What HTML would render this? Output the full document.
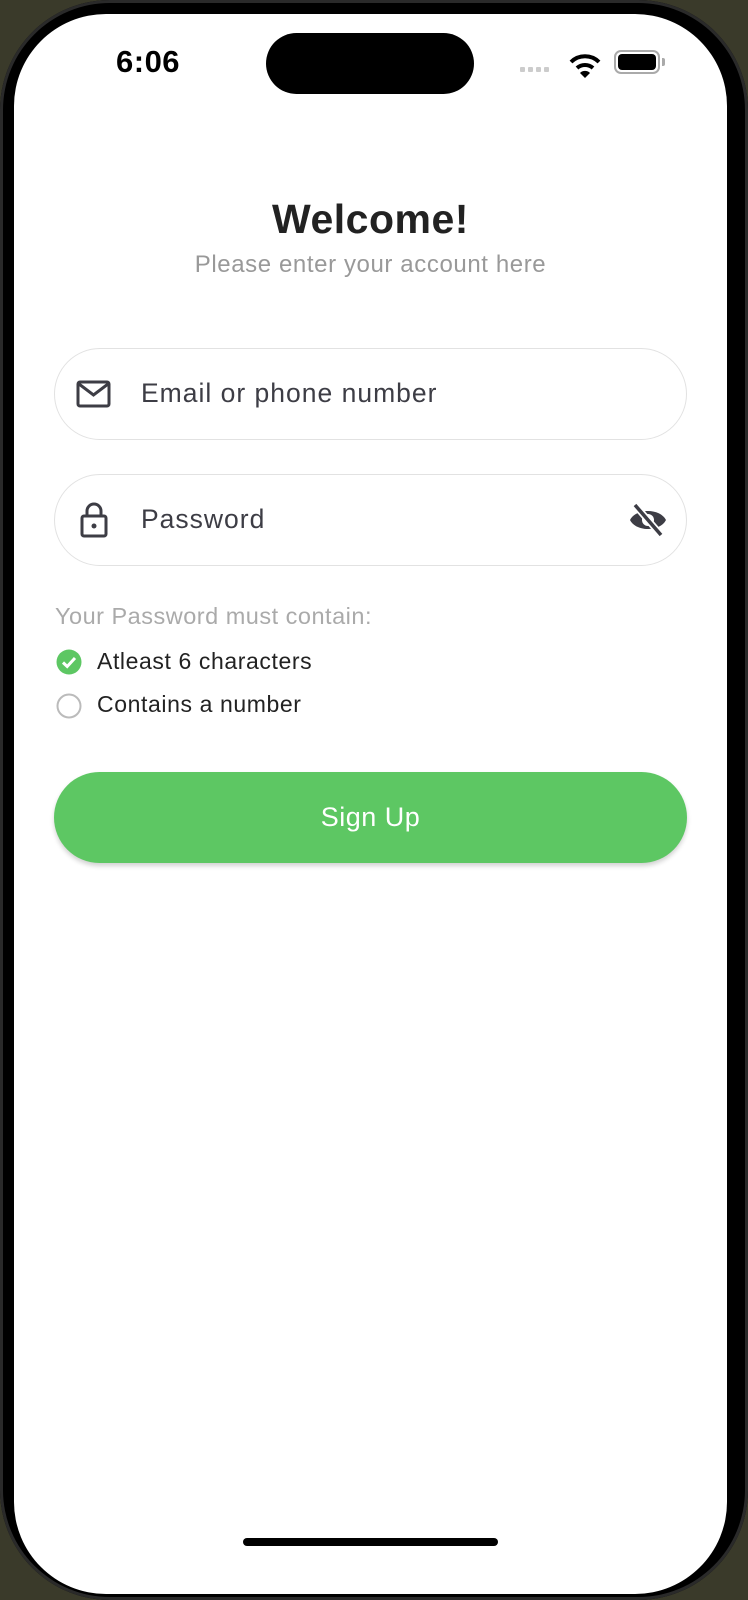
<!DOCTYPE html>
<html><head><meta charset="utf-8"><style>
html,body{margin:0;padding:0;width:748px;height:1554px;overflow:hidden;background:#3a3a2a;font-family:"Liberation Sans",sans-serif}
.frame{position:absolute;left:0;top:0;width:748px;height:1600px;background:#000;border-radius:110px;box-shadow:inset 0 0 0 3px #2a2a2a}
.screen{position:absolute;left:14px;top:14px;width:713px;height:1580px;background:#fff;border-radius:92px;overflow:hidden}
.abs{position:absolute}
.time{left:102px;top:30px;font-size:31px;font-weight:bold;color:#000;letter-spacing:0.5px}
.island{left:252px;top:19px;width:208px;height:61px;background:#000;border-radius:31px}
.field{position:absolute;left:40px;width:633px;height:92px;border:1.5px solid #e2e2e2;border-radius:46px;box-sizing:border-box}
.ph{position:absolute;left:86px;top:29px;font-size:26.5px;color:#3d3d45;letter-spacing:1px}
.req{font-size:23px;color:#222;letter-spacing:0.6px}
</style></head><body>
<div class="frame"></div>
<div class="screen">
  <div class="abs time">6:06</div>
  <div class="abs island"></div>
  <div class="abs" style="left:506px;top:53px;display:flex;gap:3px">
    <i style="width:5px;height:5px;background:#ccc;border-radius:1px;display:block"></i><i style="width:5px;height:5px;background:#ccc;border-radius:1px;display:block"></i><i style="width:5px;height:5px;background:#ccc;border-radius:1px;display:block"></i><i style="width:5px;height:5px;background:#ccc;border-radius:1px;display:block"></i>
  </div>
  <svg class="abs" style="left:555px;top:36px" width="32" height="36" viewBox="0 0 32 36"><path d="M2 12 A20 20 0 0 1 30 12" stroke="#000" stroke-width="4" fill="none"/><path d="M8 18 A12 12 0 0 1 24 18" stroke="#000" stroke-width="4" fill="none"/><path d="M16 28 L11 23 A7 7 0 0 1 21 23 Z" fill="#000"/></svg>
  <div class="abs" style="left:600px;top:36px;width:46px;height:24px;border:2px solid #aaa;border-radius:7px;box-sizing:border-box;padding:2px"><div style="width:100%;height:100%;background:#000;border-radius:4px"></div></div>
  <div class="abs" style="left:648px;top:44px;width:3px;height:8px;background:#aaa;border-radius:0 2px 2px 0"></div>

  <div class="abs" style="left:0;width:713px;top:182px;text-align:center;font-size:41px;font-weight:bold;color:#222;letter-spacing:0.5px">Welcome!</div>
  <div class="abs" style="left:0;width:713px;top:237px;text-align:center;font-size:24px;color:#999;letter-spacing:0.6px">Please enter your account here</div>

  <div class="field" style="top:334px">
    <svg class="abs" style="left:21px;top:30px" width="36" height="30" viewBox="0 0 36 30"><rect x="2" y="3" width="31" height="24" rx="2" fill="none" stroke="#3d3d45" stroke-width="3"/><path d="M3 5 L17.5 16 L32 5" fill="none" stroke="#3d3d45" stroke-width="3"/></svg>
    <div class="ph">Email or phone number</div>
  </div>
  <div class="field" style="top:460px">
    <svg class="abs" style="left:24px;top:26px" width="30" height="38" viewBox="0 0 30 38"><path d="M8 15 V10 A7 7 0 0 1 22 10 V15" fill="none" stroke="#3d3d45" stroke-width="3"/><rect x="3" y="15" width="24" height="20" rx="2" fill="none" stroke="#3d3d45" stroke-width="3"/><circle cx="15" cy="25" r="2.5" fill="#3d3d45"/></svg>
    <div class="ph">Password</div>
    <svg class="abs" style="left:574px;top:28px" width="38" height="34" viewBox="0 0 38 34"><path d="M1 17 C7 5 31 5 37 17 C31 29 7 29 1 17 Z" fill="#3d3d45"/><circle cx="19" cy="17" r="6" fill="#fff"/><circle cx="19" cy="17" r="3" fill="#3d3d45"/><path d="M6 2 L32 32" stroke="#fff" stroke-width="7"/><path d="M6 2 L32 32" stroke="#3d3d45" stroke-width="3.5"/></svg>
  </div>

  <div class="abs" style="left:41px;top:589px;font-size:23.5px;color:#aaa;letter-spacing:0.5px">Your Password must contain:</div>
  <svg class="abs" style="left:42px;top:635px" width="26" height="26" viewBox="0 0 26 26"><circle cx="13" cy="13" r="12.5" fill="#5dc763"/><path d="M7 13.5 L11.2 17.5 L19 9" stroke="#fff" stroke-width="3" fill="none"/></svg>
  <div class="abs req" style="left:83px;top:634px">Atleast 6 characters</div>
  <svg class="abs" style="left:42px;top:679px" width="26" height="26" viewBox="0 0 26 26"><circle cx="13" cy="13" r="11.5" fill="none" stroke="#bbb" stroke-width="2"/></svg>
  <div class="abs req" style="left:83px;top:677px">Contains a number</div>

  <div class="abs" style="left:40px;top:758px;width:633px;height:91px;background:#5dc763;border-radius:46px;box-shadow:0 3px 5px rgba(0,0,0,0.18);color:#fff;font-size:27px;text-align:center;line-height:91px;letter-spacing:0.5px">Sign Up</div>

  <div class="abs" style="left:229px;top:1524px;width:255px;height:8px;background:#000;border-radius:4px"></div>
</div>
</body></html>
